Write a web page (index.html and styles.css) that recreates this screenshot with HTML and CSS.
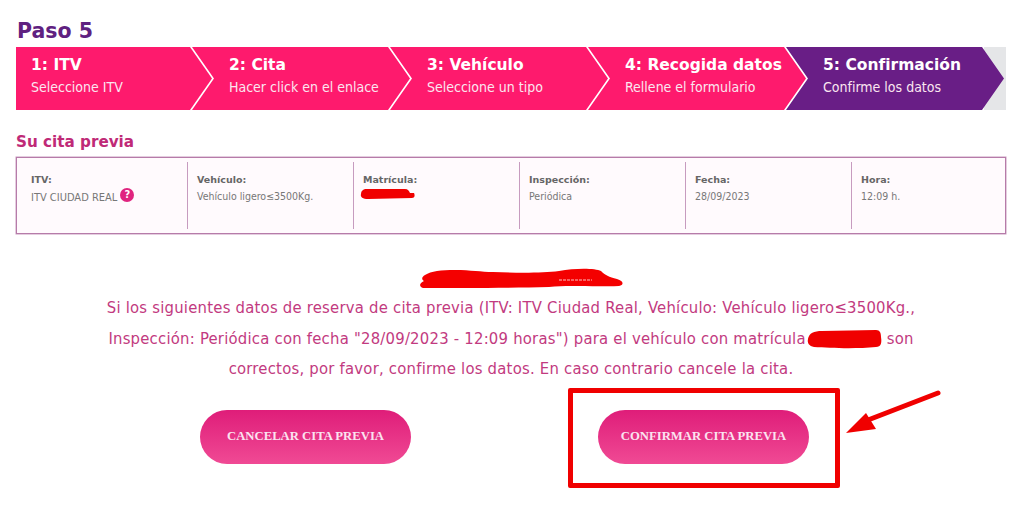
FILE: index.html
```html
<!DOCTYPE html>
<html lang="es">
<head>
    <meta charset="UTF-8">
    <meta name="viewport" content="width=device-width, initial-scale=1.0">
    <title>Paso 5 - Cita previa ITV</title>
    <link rel="stylesheet" href="styles.css">
</head>
<body>
    <div class="page">
        <h1 class="page-title">Paso 5</h1>

        <div class="steps">
            <div class="step">
                <div class="step-title">1: ITV</div>
                <div class="step-text">Seleccione ITV</div>
            </div>
            <div class="step">
                <div class="step-title">2: Cita</div>
                <div class="step-text">Hacer click en el enlace</div>
            </div>
            <div class="step">
                <div class="step-title">3: Vehículo</div>
                <div class="step-text">Seleccione un tipo</div>
            </div>
            <div class="step">
                <div class="step-title">4: Recogida datos</div>
                <div class="step-text">Rellene el formulario</div>
            </div>
            <div class="step step-active">
                <div class="step-title">5: Confirmación</div>
                <div class="step-text">Confirme los datos</div>
            </div>
        </div>

        <h2 class="section-title">Su cita previa</h2>

        <div class="summary">
            <div class="summary-cell">
                <div class="summary-label">ITV:</div>
                <div class="summary-value summary-value-help">ITV CIUDAD REAL <span class="help-icon">?</span></div>
            </div>
            <div class="summary-cell">
                <div class="summary-label">Vehículo:</div>
                <div class="summary-value">Vehículo ligero≤3500Kg.</div>
            </div>
            <div class="summary-cell">
                <div class="summary-label">Matrícula:</div>
                <svg class="blot-plate" width="56" height="12" viewBox="0 0 56 12">
                    <path fill="#f00000" d="M1 6C1 3 3 1 7 1L45 1C48 1 49 3 50 5L54 5C55 7 55 10 52 10L8 11C3 11 0 9 1 6Z"/>
                </svg>
            </div>
            <div class="summary-cell">
                <div class="summary-label">Inspección:</div>
                <div class="summary-value">Periódica</div>
            </div>
            <div class="summary-cell">
                <div class="summary-label">Fecha:</div>
                <div class="summary-value">28/09/2023</div>
            </div>
            <div class="summary-cell">
                <div class="summary-label">Hora:</div>
                <div class="summary-value">12:09 h.</div>
            </div>
        </div>

        <svg class="blot-name" width="206" height="20" viewBox="0 0 206 20">
            <path fill="#f40000" d="M6 7C12 3 22 2 36 2C52 2 62 4 74 4C100 5 124 5 140 3C156 0 176 0 182 3C186 7 190 9 198 11C205 13 205 17 200 18C170 19 150 17 130 19C90 20 40 20 4 20C0 19 0 15 5 13C2 11 3 9 6 7Z"/>
            <path stroke="#ffc0c0" stroke-width="1" stroke-dasharray="3 1" d="M140 12H173"/>
        </svg>

        <p class="message">Si los siguientes datos de reserva de cita previa (ITV: ITV Ciudad Real, Vehículo: Vehículo ligero≤3500Kg.,<br>Inspección: Periódica con fecha "28/09/2023 - 12:09 horas") para el vehículo con matrícula<svg class="blot-inline" width="76" height="20" viewBox="0 0 76 20"><path fill="#f00000" d="M2 10C3 4 8 2 16 2L70 1C74 1 75 4 75 8C76 14 75 18 70 18C50 20 24 19 8 18C3 17 1 14 2 10Z"/></svg> son<br>correctos, por favor, confirme los datos. En caso contrario cancele la cita.</p>

        <div class="actions">
            <button class="action-btn">CANCELAR CITA PREVIA</button>
            <button class="action-btn">CONFIRMAR CITA PREVIA</button>

            <div class="highlight-box"></div>
            <svg class="highlight-arrow" width="100" height="48" viewBox="0 0 100 48">
                <path stroke="#f00000" stroke-width="5" stroke-linecap="round" d="M94 4L24 31"/>
                <path fill="#f00000" d="M2 44L22 24L32 40Z"/>
            </svg>
        </div>
    </div>
</body>
</html>
```

FILE: styles.css
```css
* {
    margin: 0;
    padding: 0;
    box-sizing: border-box;
}

body {
    font-family: "DejaVu Sans", "Liberation Sans", sans-serif;
    font-stretch: condensed;
    background: #fff;
    color: #666;
}

.page {
    padding: 17px 18px 24px 16px;
}

.page-title {
    font-size: 20.5px;
    font-stretch: normal;
    line-height: 29px;
    font-weight: bold;
    color: #5f2180;
    margin-left: 1px;
    margin-bottom: 1px;
}

.steps {
    display: flex;
    height: 63px;
    background: linear-gradient(to left, #e5e6e8 22px, transparent 22px);
}

.step {
    flex: 0 0 218px;
    margin-left: -20px;
    padding: 8px 0 0 37px;
    background: #fe1a6d;
    color: #fff;
    clip-path: polygon(0 0, calc(100% - 22px) 0, 100% 50%, calc(100% - 22px) 100%, 0 100%, 22px 50%);
}

.step:first-child {
    flex-basis: 196px;
    margin-left: 0;
    padding-left: 15px;
    clip-path: polygon(0 0, calc(100% - 22px) 0, 100% 50%, calc(100% - 22px) 100%, 0 100%);
}

.step-active {
    background: #691e86;
}

.step-title {
    font-size: 15.5px;
    font-stretch: normal;
    line-height: 20px;
    font-weight: bold;
}

.step-text {
    font-size: 14px;
    line-height: 25px;
    color: #fbe6f0;
}

.section-title {
    font-size: 15.2px;
    font-stretch: normal;
    line-height: 20px;
    font-weight: bold;
    color: #bf2a77;
    margin-top: 22px;
    margin-bottom: 5px;
}

.summary {
    display: grid;
    grid-template-columns: 170px repeat(5, 166px);
    height: 77px;
    padding: 4px 0;
    background: #fffafd;
    border: 1px solid #b67ba9;
    box-shadow: 0 0 0 0.5px #c99bc0;
}

.summary-cell {
    padding: 10px 0 0 9px;
    border-left: 1px solid #c79bbf;
}

.summary-cell:first-child {
    padding-left: 14px;
    border-left: none;
}

.summary-label {
    font-size: 9.5px;
    font-stretch: normal;
    line-height: 15px;
    font-weight: bold;
    color: #666;
}

.summary-value {
    font-size: 10.5px;
    line-height: 18px;
    color: #777;
}

.summary-value-help {
    display: flex;
    align-items: center;
    gap: 3px;
    margin-top: 1px;
    font-size: 11px;
    line-height: 20px;
}

.help-icon {
    display: inline-block;
    width: 14px;
    height: 14px;
    margin-top: -6px;
    background: #e0247f;
    border-radius: 50%;
    color: #fff;
    font-size: 11px;
    line-height: 14px;
    font-weight: bold;
    text-align: center;
}

.blot-plate {
    display: block;
    margin-left: -3px;
    margin-top: 1px;
}

.blot-name {
    display: block;
    margin: 34px 0 0 403px;
}

.message {
    margin-top: 5px;
    text-align: center;
    font-size: 16.5px;
    letter-spacing: 0.23px;
    line-height: 30.5px;
    color: #c23a80;
}

.blot-inline {
    vertical-align: -5px;
}

.actions {
    position: relative;
    display: flex;
    gap: 187px;
    margin-top: 25px;
    padding-left: 184px;
}

.action-btn {
    width: 211px;
    height: 54px;
    border: none;
    border-radius: 27px;
    background: linear-gradient(#df1d79, #f04a94);
    color: #fbe3f0;
    font-family: "Liberation Serif", serif;
    font-size: 12.7px;
    font-weight: bold;
}

.highlight-box {
    position: absolute;
    left: 552px;
    top: -22px;
    width: 272px;
    height: 100px;
    border: 5px solid #f00000;
    border-radius: 2px;
}

.highlight-arrow {
    position: absolute;
    left: 828px;
    top: -21px;
}
```
